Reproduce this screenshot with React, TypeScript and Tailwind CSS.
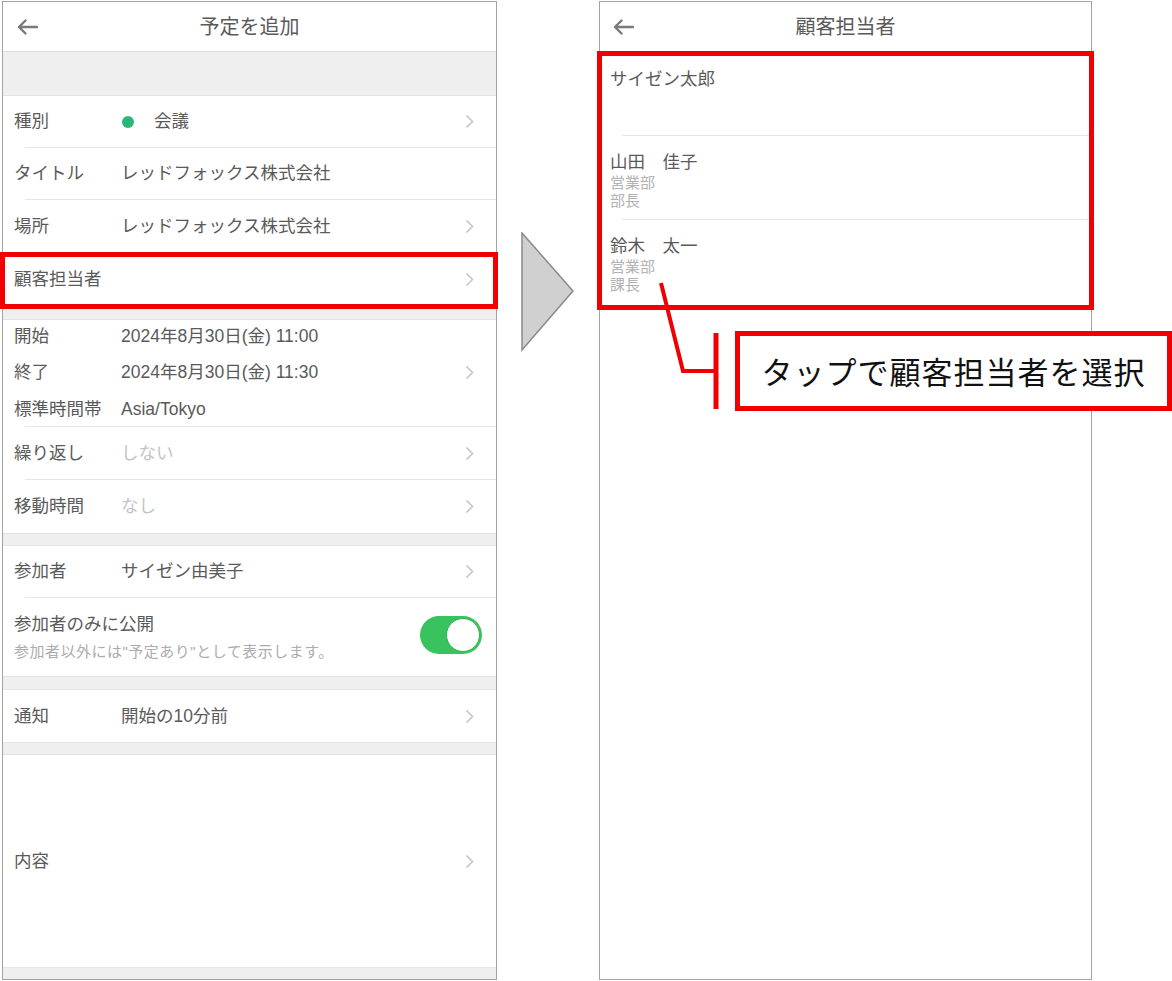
import React from "react";

const Chevron = () => (
  <svg width="9" height="15" viewBox="0 0 9 15" className="shrink-0">
    <polyline points="1.5,1.5 7.5,7.5 1.5,13.5" fill="none" stroke="#c6c6c6" strokeWidth="1.6" />
  </svg>
);

const BackArrow = () => (
  <svg width="22" height="16" viewBox="0 0 22 16">
    <path d="M21 8 H3 M9.5 1.5 L3 8 L9.5 14.5" fill="none" stroke="#7a7a7a" strokeWidth="2.4" strokeLinecap="round" strokeLinejoin="round" />
  </svg>
);

const Sep = () => <div className="ml-[22px] h-px bg-[#e6e6e6]" />;
const Band = ({ h }: { h: string }) => (
  <div className={`${h} bg-[#efefef] border-t border-b border-[#e4e4e4]`} />
);

function Row({ label, value, chevron = true, muted = false, dot = false }: { label: string; value?: string; chevron?: boolean; muted?: boolean; dot?: boolean }) {
  return (
    <div className="flex-1 flex items-center pl-[11px] pr-[22px]">
      <div className="w-[107px] shrink-0 text-[17.5px] text-[#5a5a5a]">{label}</div>
      <div className={`flex-1 flex items-center text-[17.5px] ${muted ? "text-[#c4c4c4]" : "text-[#5a5a5a]"}`}>
        {dot && <span className="w-[12px] h-[12px] rounded-full bg-[#2bb57a] ml-[1px] mr-[20px]" />}
        {value}
      </div>
      {chevron && <Chevron />}
    </div>
  );
}

export default function App() {
  return (
    <div className="relative w-[1172px] h-[981px] bg-white overflow-hidden font-['Liberation_Sans','Noto_Sans_CJK_JP',sans-serif]">
      <div className="flex items-start pt-[1px] pl-[2px]">
        {/* Left phone */}
        <div className="w-[495px] h-[979px] border border-[#a3a3a3] flex flex-col bg-white">
          <div className="h-[50px] shrink-0 relative flex items-center justify-center border-b border-[#dedede]">
            <div className="absolute left-[13px] top-[17px]"><BackArrow /></div>
            <div className="text-[20px] text-[#5a5a5a]">予定を追加</div>
          </div>
          <div className="h-[44px] shrink-0 bg-[#efefef] border-b border-[#e4e4e4]" />
          <div className="h-[52px] shrink-0 flex flex-col"><Row label="種別" value="会議" dot /><Sep /></div>
          <div className="h-[52px] shrink-0 flex flex-col"><Row label="タイトル" value="レッドフォックス株式会社" chevron={false} /><Sep /></div>
          <div className="h-[52px] shrink-0 flex flex-col"><Row label="場所" value="レッドフォックス株式会社" /></div>
          <div className="h-[54px] shrink-0 flex flex-col border-t border-[#e6e6e6]"><Row label="顧客担当者" /></div>
          <Band h="h-[14px] shrink-0" />
          <div className="h-[107px] shrink-0 flex flex-col">
            <div className="flex-1 flex flex-col pt-[5px] gap-[14.5px] pl-[11px] pr-[22px]">
              <div className="h-[22px] flex items-center"><span className="w-[107px] text-[17.5px] text-[#5a5a5a]">開始</span><span className="flex-1 text-[17.5px] text-[#5a5a5a]">2024年8月30日(金) 11:00</span></div>
              <div className="h-[22px] flex items-center"><span className="w-[107px] text-[17.5px] text-[#5a5a5a]">終了</span><span className="flex-1 text-[17.5px] text-[#5a5a5a]">2024年8月30日(金) 11:30</span><Chevron /></div>
              <div className="h-[22px] flex items-center"><span className="w-[107px] text-[17.5px] text-[#5a5a5a]">標準時間帯</span><span className="flex-1 text-[17.5px] text-[#5a5a5a]">Asia/Tokyo</span></div>
            </div>
            <Sep />
          </div>
          <div className="h-[53px] shrink-0 flex flex-col"><Row label="繰り返し" value="しない" muted /><Sep /></div>
          <div className="h-[53px] shrink-0 flex flex-col"><Row label="移動時間" value="なし" muted /></div>
          <Band h="h-[13px] shrink-0" />
          <div className="h-[52px] shrink-0 flex flex-col"><Row label="参加者" value="サイゼン由美子" /><Sep /></div>
          <div className="h-[78px] shrink-0 flex items-center pl-[11px] pr-[14px]">
            <div className="flex-1 flex flex-col">
              <div className="text-[17.5px] text-[#5a5a5a] leading-[26px]">参加者のみに公開</div>
              <div className="text-[15px] tracking-[0.5px] text-[#acacac] leading-[22px] mt-[4px]">参加者以外には"予定あり"として表示します。</div>
            </div>
            <div className="w-[62px] h-[38px] rounded-full bg-[#38c35e] flex items-center justify-end pr-[2px] mt-[-4px]">
              <div className="w-[34px] h-[34px] rounded-full bg-white border-[1.5px] border-[#2fb552]" />
            </div>
          </div>
          <Band h="h-[14px] shrink-0" />
          <div className="h-[52px] shrink-0 flex flex-col"><Row label="通知" value="開始の10分前" /></div>
          <Band h="h-[13px] shrink-0" />
          <div className="h-[212px] shrink-0 flex flex-col"><Row label="内容" /></div>
          <div className="flex-1 bg-[#efefef] border-t border-[#e4e4e4]" />
        </div>

        {/* Arrow triangle */}
        <svg width="54" height="120" viewBox="0 0 54 120" className="ml-[24px] mt-[231px] shrink-0">
          <polygon points="1,1 52,59 1,118" fill="#d0d0d0" stroke="#8a8a8a" strokeWidth="1.5" strokeLinejoin="miter" />
        </svg>

        {/* Right phone */}
        <div className="ml-[24px] w-[493px] h-[979px] border border-[#a3a3a3] flex flex-col bg-white">
          <div className="h-[49px] shrink-0 relative flex items-center justify-center">
            <div className="absolute left-[12px] top-[17px]"><BackArrow /></div>
            <div className="text-[20px] text-[#5a5a5a]">顧客担当者</div>
          </div>
          <div className="h-[85px] shrink-0 flex flex-col">
            <div className="flex-1 pl-[10px] pt-[16px]">
              <div className="text-[17.5px] text-[#5a5a5a] leading-[24px]">サイゼン太郎</div>
            </div>
            <Sep />
          </div>
          <div className="h-[84px] shrink-0 flex flex-col">
            <div className="flex-1 pl-[10px] pt-[14px]">
              <div className="text-[17.5px] text-[#5a5a5a] leading-[24px]">山田　佳子</div>
              <div className="text-[15px] text-[#b3b3b3] leading-[18px]">営業部</div>
              <div className="text-[15px] text-[#b3b3b3] leading-[18px]">部長</div>
            </div>
            <Sep />
          </div>
          <div className="h-[84px] shrink-0 flex flex-col">
            <div className="flex-1 pl-[10px] pt-[14px]">
              <div className="text-[17.5px] text-[#5a5a5a] leading-[24px]">鈴木　太一</div>
              <div className="text-[15px] text-[#b3b3b3] leading-[18px]">営業部</div>
              <div className="text-[15px] text-[#b3b3b3] leading-[18px]">課長</div>
            </div>
          </div>
          <div className="flex-1" />
        </div>
      </div>

      {/* Overlays: highlight boxes, connector, callout */}
      <div className="absolute left-[0px] top-[252px] w-[498px] h-[57px] border-[5px] border-[#f00000]" />
      <div className="absolute left-[597px] top-[51px] w-[497px] h-[259px] border-[5px] border-[#f00000]" />
      <svg className="absolute left-0 top-0" width="1172" height="981" viewBox="0 0 1172 981">
        <polyline points="661,283 683,371 716,371" fill="none" stroke="#f00000" strokeWidth="4" strokeLinejoin="miter" />
        <line x1="716" y1="333" x2="716" y2="409" stroke="#f00000" strokeWidth="5" />
      </svg>
      <div className="absolute left-[735px] top-[331px] w-[437px] h-[80px] border-[5px] border-[#f00000] bg-white flex items-center justify-center">
        <span className="text-[31px] text-[#111] tracking-[1px] font-['Noto_Sans_CJK_JP',sans-serif]">タップで顧客担当者を選択</span>
      </div>
    </div>
  );
}
